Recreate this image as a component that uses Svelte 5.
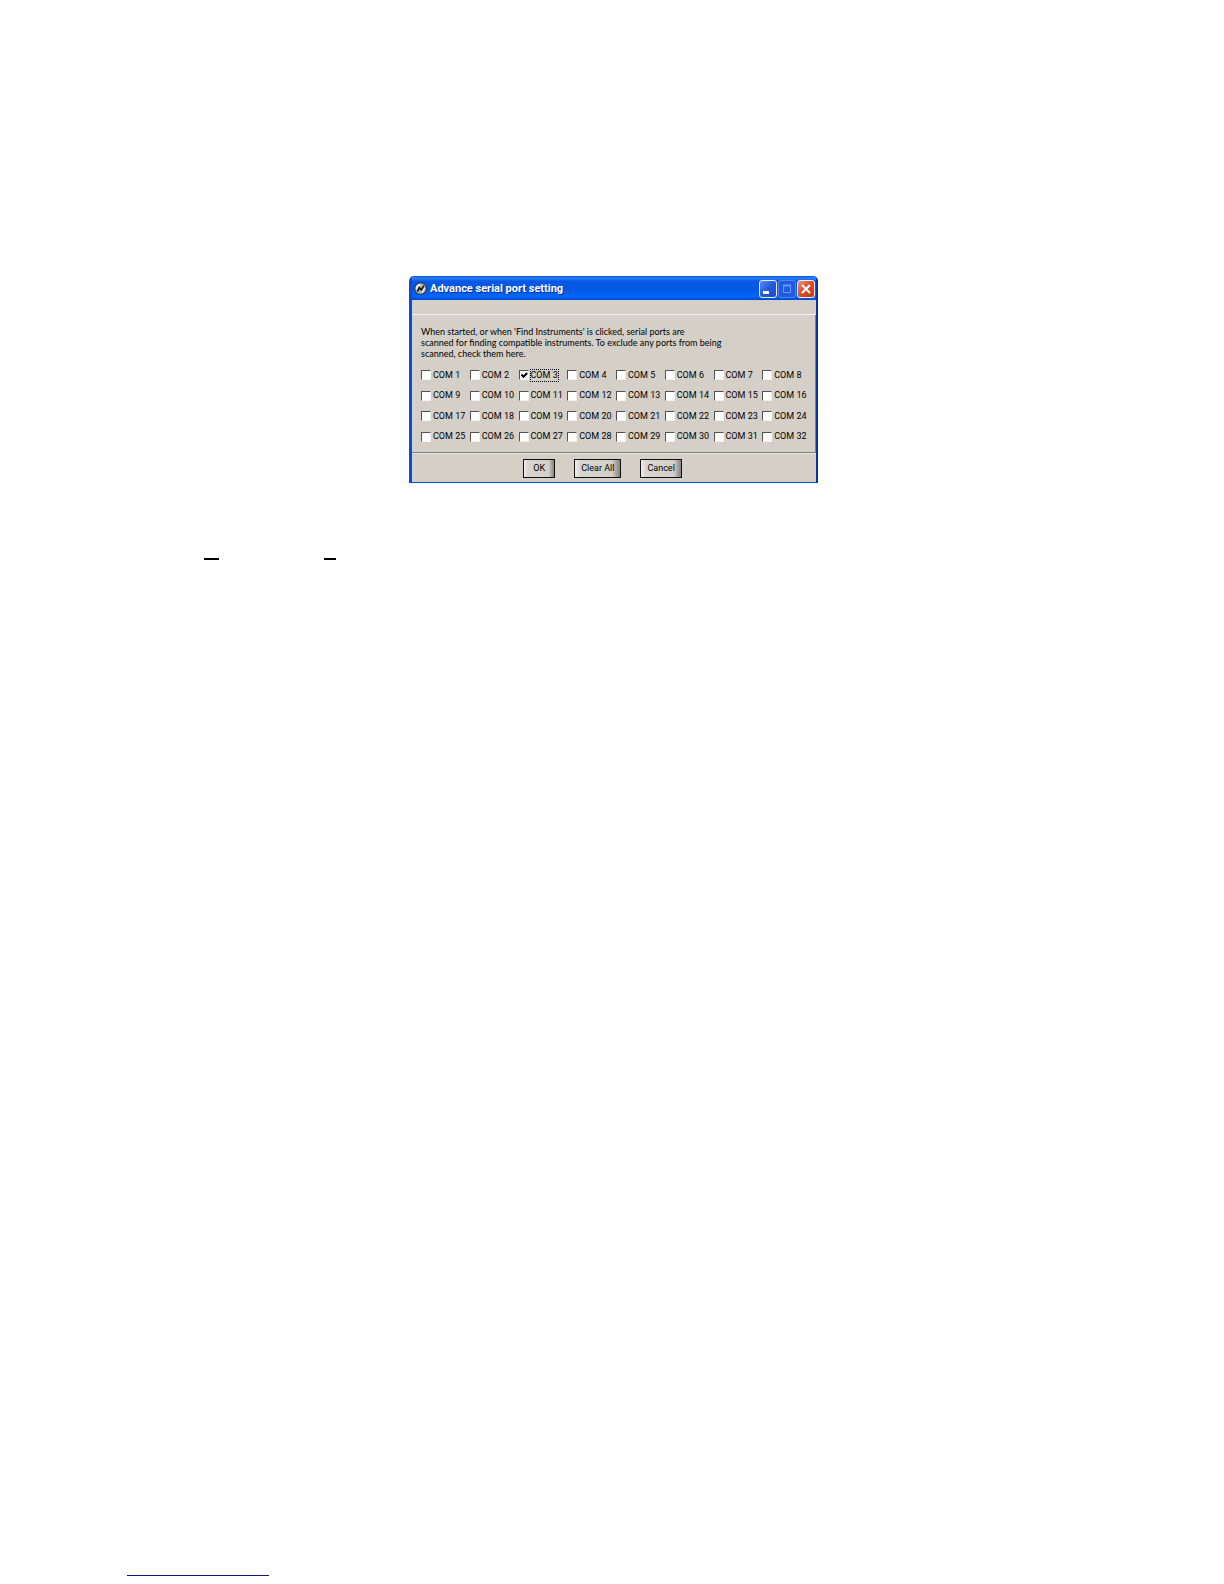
<script>
  let ports = $state(
    Array.from({ length: 32 }, (_, i) => ({ number: i + 1, checked: i === 2 }))
  );

  function clearAll() {
    for (const port of ports) port.checked = false;
  }
</script>

<main class="page">
  <section class="dialog" aria-label="Advance serial port setting">
    <header class="titlebar">
      <svg class="logo" viewBox="0 0 13 13" aria-hidden="true">
        <circle cx="6.5" cy="6.5" r="6.3" fill="#2b343e" />
        <circle cx="6.5" cy="6.5" r="5.3" fill="#b4b6b6" />
        <path d="M2 7.5a4.6 4.6 0 0 1 5-5.3L4.2 6.5z" fill="#f2f3f3" />
        <path d="M3.4 9.6 5.2 5.6 7.3 7.9 9.8 3.6" fill="none" stroke="#15191e" stroke-width="1.7" />
        <path d="M8 10.4 10.8 6.4" fill="none" stroke="#f2f2f2" stroke-width="1.2" />
      </svg>
      <h1>Advance serial port setting</h1>
      <div class="controls">
        <button class="control" type="button" aria-label="Minimize">
          <svg viewBox="0 0 16 16"><path d="M3 10h6v3H3z" fill="#fff" /></svg>
        </button>
        <button class="control off" type="button" aria-label="Maximize" disabled>
          <svg viewBox="0 0 16 16">
            <path d="M4.5 4.5h7v7h-7z" fill="none" stroke="#6d98f4" />
            <path d="M4 4.5h8" stroke="#6d98f4" stroke-width="2" />
          </svg>
        </button>
        <button class="control close" type="button" aria-label="Close">
          <svg viewBox="0 0 16 16"><path d="m4 4 8 8m0-8-8 8" stroke="#fff" stroke-width="2" /></svg>
        </button>
      </div>
    </header>
    <div class="strip"></div>
    <div class="panel">
      <p>
        When started, or when 'Find Instruments' is clicked, serial ports are<br />
        scanned for finding compatible instruments. To exclude any ports from being<br />
        scanned, check them here.
      </p>
      <div class="ports">
        {#each ports as port (port.number)}
          <label class:focused={port.number === 3}>
            <input type="checkbox" bind:checked={port.checked} />
            <svg class="tick" viewBox="0 0 10 10" aria-hidden="true">
              <path d="M2.5 4.5 4.5 6.7 8.2 3" fill="none" stroke="#000" stroke-width="2" />
            </svg>
            <span>COM {port.number}</span>
          </label>
        {/each}
      </div>
    </div>
    <footer class="actions">
      <button type="button">OK</button>
      <button type="button" onclick={clearAll}>Clear All</button>
      <button type="button">Cancel</button>
    </footer>
  </section>

  <div class="marks" aria-hidden="true">
    <i class="mark"></i>
    <i class="mark short"></i>
  </div>
  <div class="rule" aria-hidden="true"></div>
</main>

<style>
  :global(body) {
    background: #fff;
  }

  .page {
    box-sizing: border-box;
    min-height: 100vh;
    display: flex;
    flex-direction: column;
    padding: 276px 0 8px 3px;
    font: 9px/11px Roboto, "Liberation Sans", sans-serif;
    color: #000;
  }

  .dialog {
    box-sizing: border-box;
    width: 100%;
    max-width: 409px;
    margin: 0 auto;
    border: solid #0a4bd8;
    border-width: 0 2px 1px 3px;
    border-right-color: #0831b0;
    border-radius: 5px 5px 0 0;
    background: #d4d0c8;
    overflow: hidden;
  }

  .titlebar {
    display: flex;
    align-items: center;
    height: 23px;
    margin: 0 -2px 0 -3px;
    padding: 1px 3px 0 5px;
    background: linear-gradient(#0a50c8 0, #2a82f6 8%, #0759e4 22%, #0558e6 55%, #0366fc 85%, #0148c8 100%);
  }

  .logo {
    width: 13px;
    height: 13px;
    margin-right: 3px;
  }

  h1 {
    flex: 1;
    margin: 0;
    font: bold 11px/16px Roboto, "Liberation Sans", sans-serif;
    color: #fff;
    white-space: nowrap;
    text-shadow: 1px 1px #0a3190;
  }

  .controls {
    display: flex;
    gap: 1px;
  }

  .control {
    box-sizing: border-box;
    width: 18px;
    height: 18px;
    padding: 0;
    border: 1px solid #e8f0ff;
    border-radius: 3px;
    background: linear-gradient(135deg, #5b8cf0, #2459de 50%, #1c4cc8);
  }

  .control svg {
    display: block;
    width: 16px;
    height: 16px;
  }

  .control.off {
    border-color: #4f83f0;
    background: #1f5be0;
  }

  .control.close {
    background: linear-gradient(135deg, #ee9277, #dc4c25 50%, #c03a12);
  }

  .strip {
    height: 14px;
    border-bottom: 1px solid #f4f2ec;
  }

  .panel {
    padding: 11px 4px 9px 9px;
    border-right: 1px solid #808080;
    border-bottom: 1px solid #808080;
  }

  p {
    margin: 0 0 10px;
    font-family: Lato, "Liberation Sans", sans-serif;
    white-space: nowrap;
  }

  .ports {
    display: grid;
    grid-template-columns: repeat(8, 1fr);
    align-content: space-between;
    height: 74px;
  }

  label {
    display: grid;
    grid-template-columns: 10px auto;
    justify-content: start;
    align-items: center;
    column-gap: 2px;
    height: 12px;
    white-space: nowrap;
  }

  input {
    grid-area: 1 / 1;
    appearance: none;
    box-sizing: border-box;
    width: 10px;
    height: 10px;
    margin: 0;
    border: solid 1px;
    border-color: #55534f #f4f2ec #f4f2ec #55534f;
    background: #fff;
  }

  .tick {
    grid-area: 1 / 1;
    width: 10px;
    height: 10px;
    visibility: hidden;
    pointer-events: none;
  }

  input:checked + .tick {
    visibility: visible;
  }

  .focused span {
    outline: 1px dotted #000;
  }

  .actions {
    display: flex;
    justify-content: center;
    gap: 19px;
    padding: 5px 23px 4px 0;
    border-top: 1px solid #e6e3dc;
  }

  .actions button {
    box-sizing: border-box;
    min-width: 32px;
    height: 19px;
    padding: 0 6px;
    border: 1px solid #111;
    background: linear-gradient(90deg, #f0eee9 0, #d8d5ce 12%, #d4d0c8 82%, #85827c 100%);
    font: inherit;
    color: #000;
  }

  .marks {
    display: flex;
    gap: 105px;
    margin: 75px 0 0 201px;
  }

  .mark {
    width: 15px;
    height: 2px;
    background: #000;
  }

  .mark.short {
    width: 12px;
  }

  .rule {
    width: 142px;
    height: 1px;
    margin: auto 0 0 124px;
    background: #14147e;
  }
</style>
